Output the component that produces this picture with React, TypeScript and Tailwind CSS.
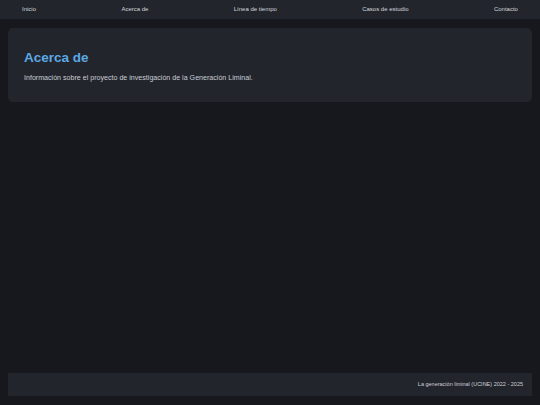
export default function App() {
  const items = ["Inicio", "Acerca de", "Línea de tiempo", "Casos de estudio", "Contacto"];
  return (
    <div className="flex min-h-screen flex-col bg-[#16181e] font-['Liberation_Sans',Arial,sans-serif]">
      <nav className="flex h-[19px] items-center justify-between bg-[#22252c] px-[22px] text-[6px] text-[#d3d6db]">
        {items.map((i) => (
          <span key={i}>{i}</span>
        ))}
      </nav>
      <main className="flex-1 px-2 pt-[9px]">
        <section className="rounded-[5px] bg-[#22252c] px-4 pt-[20px] pb-[18px]">
          <h1 className="mb-[5px] text-[13.5px] font-bold leading-normal text-[#5ca8e4]">Acerca de</h1>
          <p className="text-[7.1px] leading-normal text-[#c9cdd3]">
            Información sobre el proyecto de investigación de la Generación Liminal.
          </p>
        </section>
      </main>
      <footer className="mx-2 mb-[9px] flex h-[23px] items-center justify-end bg-[#22252c] pr-[9px] text-[5.5px] text-[#cdd0d6]">
        La generación liminal (UCINE) 2022 - 2025
      </footer>
    </div>
  );
}
